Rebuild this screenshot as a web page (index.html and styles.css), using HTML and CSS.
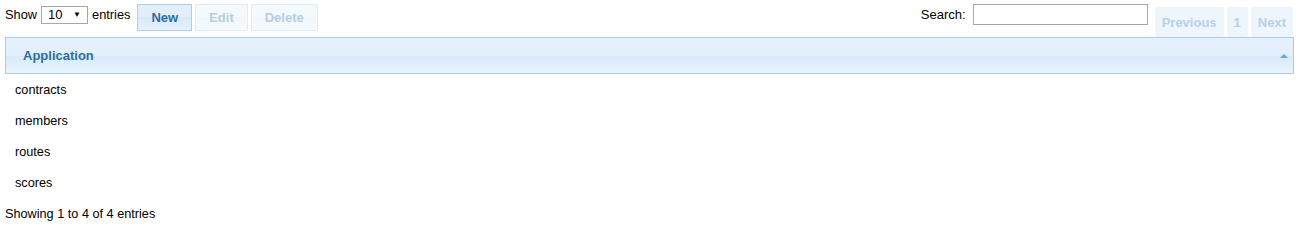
FILE: index.html
```html
<!DOCTYPE html>
<html lang="en">
<head>
    <meta charset="UTF-8">
    <title>Applications</title>
    <link rel="stylesheet" href="styles.css">
</head>
<body>
    <div class="wrapper">
        <!-- Toolbar -->
        <div class="toolbar">
            <div class="toolbar-left">
                <div class="length">
                    <span>Show</span>
                    <div class="select"><span>10</span><span class="caret">&#9660;</span></div>
                    <span>entries</span>
                </div>
                <button class="btn first">New</button>
                <button class="btn disabled">Edit</button>
                <button class="btn disabled">Delete</button>
            </div>
            <div class="toolbar-right">
                <label class="search">Search: <input type="text"></label>
                <div class="paging">
                    <span class="page-btn">Previous</span>
                    <span class="page-btn">1</span>
                    <span class="page-btn">Next</span>
                </div>
            </div>
        </div>

        <!-- Table -->
        <div class="table">
            <div class="th">
                <span>Application</span>
                <span class="sort-arrow"></span>
            </div>
            <div class="row">contracts</div>
            <div class="row">members</div>
            <div class="row">routes</div>
            <div class="row">scores</div>
        </div>

        <div class="info">Showing 1 to 4 of 4 entries</div>
    </div>
</body>
</html>
```

FILE: styles.css
```css
/* General */
body {
    margin: 0;
    font-family: "Liberation Sans", Arial, sans-serif;
    font-size: 12.8px;
    color: #000;
    background: #fff;
}

.wrapper {
    padding: 4px 5px 0 5px;
}

/* Toolbar */
.toolbar {
    display: flex;
    justify-content: space-between;
    height: 33px;
}

.toolbar-left,
.toolbar-right {
    display: flex;
    align-items: flex-start;
}

.length {
    display: flex;
    align-items: center;
    height: 20px;
    gap: 4px;
}

.select {
    display: flex;
    justify-content: space-between;
    align-items: center;
    box-sizing: border-box;
    width: 47px;
    height: 18px;
    margin-top: 1px;
    padding: 0 6px 0 6px;
    border: 1px solid #a6a6a6;
    font-size: 13px;
}

.select .caret {
    font-size: 8px;
}

.btn {
    box-sizing: border-box;
    height: 27px;
    margin-left: 3px;
    padding: 0 13px;
    border: 1px solid #a9cdea;
    background: linear-gradient(#e2effb 0%, #e2effb 50%, #d6e9f9 50%, #e6f2fc 100%);
    color: #2e6e9e;
    font-family: "Liberation Sans", Arial, sans-serif;
    font-size: 13px;
    font-weight: bold;
}

.btn.first {
    margin-left: 7px;
}

.btn.disabled {
    opacity: 0.35;
}

.search {
    display: flex;
    align-items: center;
    height: 21px;
    gap: 7px;
    font-size: 13px;
}

.search input {
    box-sizing: border-box;
    width: 175px;
    height: 21px;
    margin: 0;
    border: 1px solid #a6a6a6;
}

.paging {
    display: flex;
    gap: 3px;
    margin: 3px 1px 0 7px;
}

.page-btn {
    box-sizing: border-box;
    height: 30px;
    line-height: 31px;
    padding: 0 7px;
    border-radius: 3px;
    background: #eef5fc;
    color: #b7d1e8;
    font-size: 13px;
    font-weight: bold;
}

/* Table */
.th {
    display: flex;
    justify-content: space-between;
    align-items: center;
    box-sizing: border-box;
    height: 37px;
    padding: 0 5px 0 17px;
    border: 1px solid #a9cdea;
    background: linear-gradient(#e4f0fb 0%, #e3f0fb 50%, #d6e9f8 50%, #eaf4fd 100%);
    color: #2e6e9e;
    font-size: 13px;
    font-weight: bold;
}

.sort-arrow {
    width: 0;
    height: 0;
    border-left: 4px solid transparent;
    border-right: 4px solid transparent;
    border-bottom: 4px solid #6aa3d6;
    margin-top: 1px;
}

.row {
    height: 31px;
    line-height: 33px;
    padding-left: 10px;
    font-size: 12.7px;
}

.info {
    padding-top: 9px;
    line-height: 15px;
    font-size: 12.7px;
}
```
